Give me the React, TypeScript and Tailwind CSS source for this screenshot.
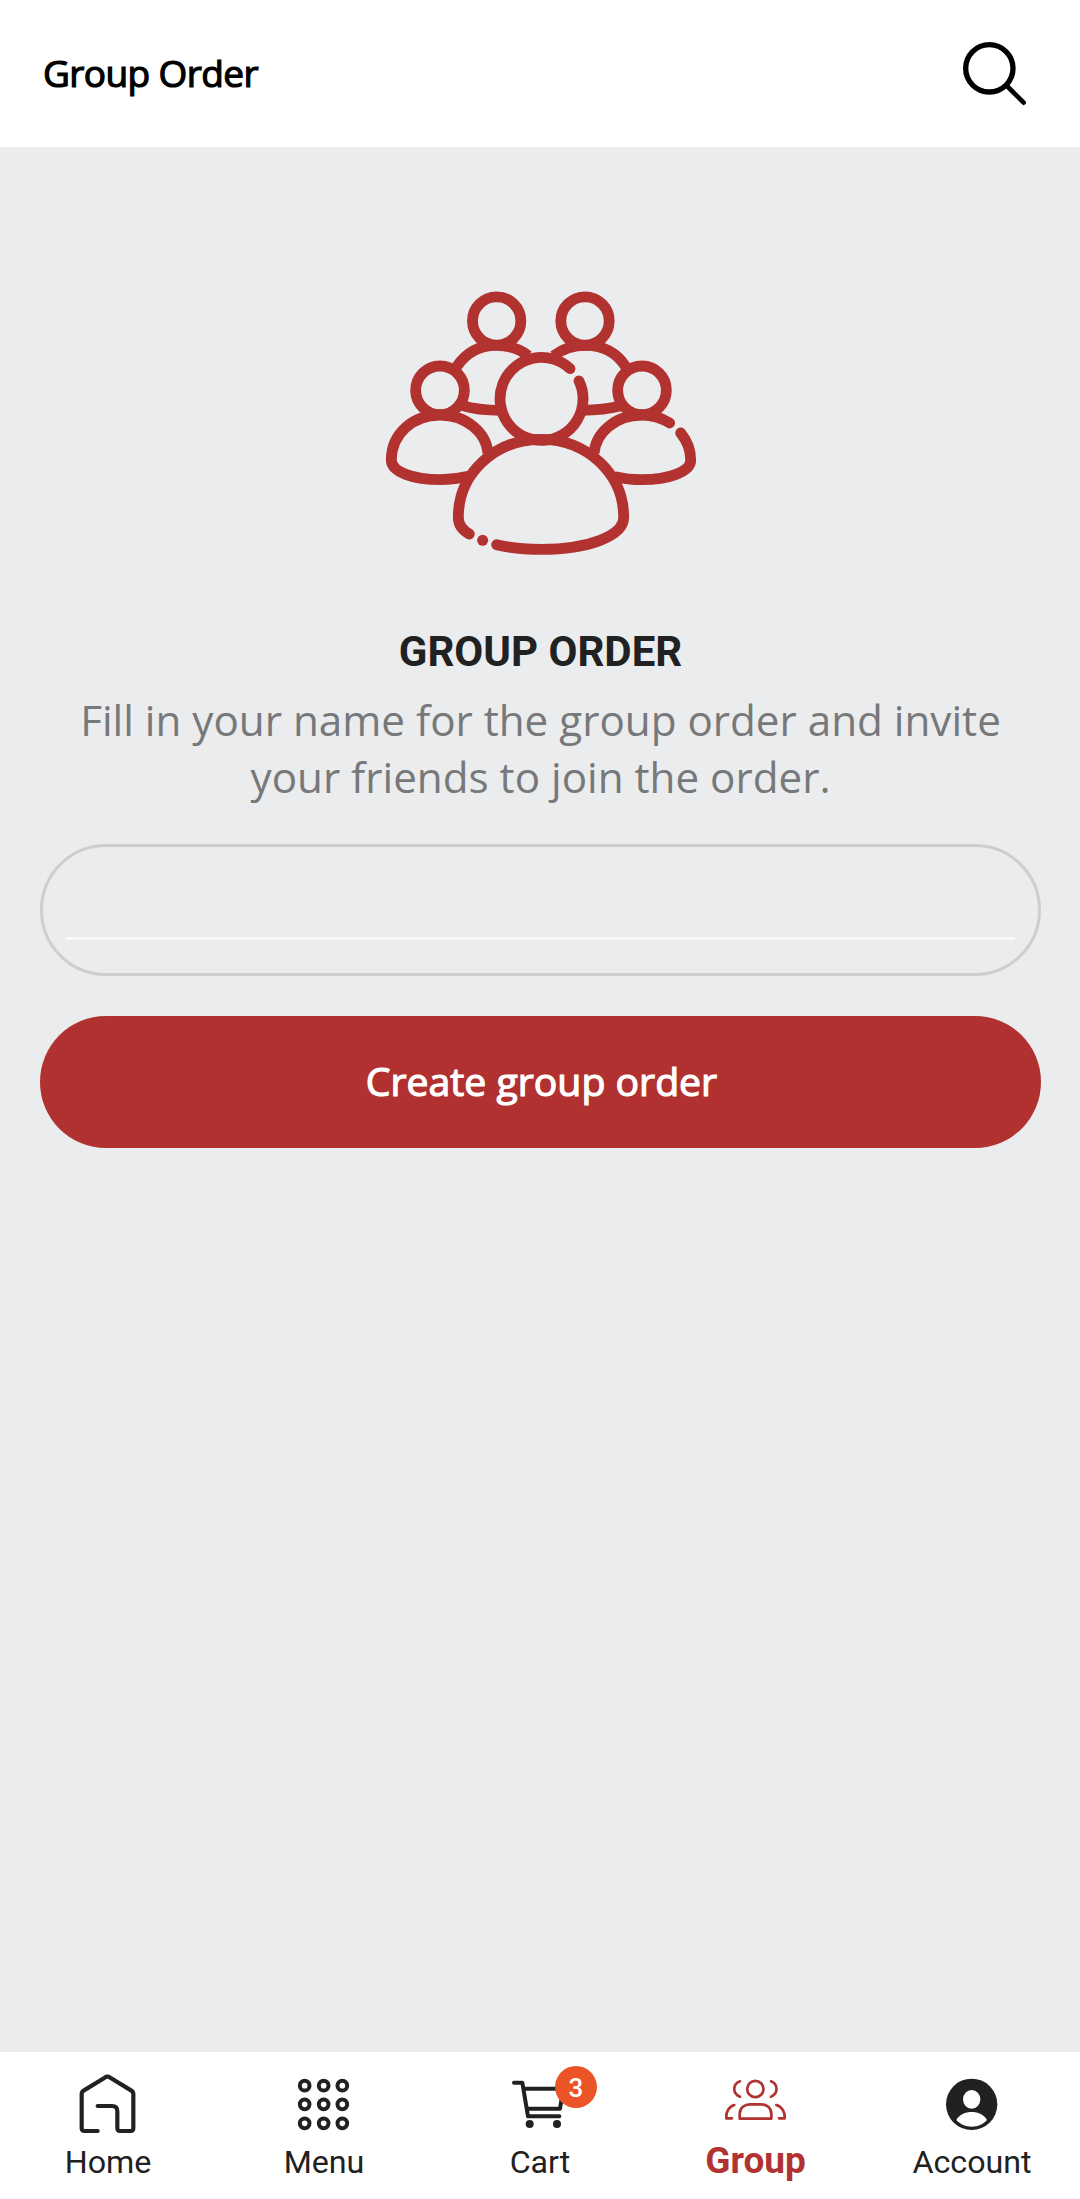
import React, { useState } from "react";

interface NavItemProps {
  label: string;
  active?: boolean;
  badge?: number;
  onClick: () => void;
  children: React.ReactNode;
}

const SearchIcon = () => (
  <svg
    viewBox="0 0 192 192"
    className="h-16 w-16"
    fill="none"
    stroke="currentColor"
    strokeWidth={16}
    strokeLinecap="round"
  >
    <circle cx="79" cy="79" r="71" />
    <path d="M132 132L182 182" strokeWidth={14} />
  </svg>
);

const PeopleIllustration = () => (
  <svg
    viewBox="0 0 1020 900"
    className="mr-px h-[300px] w-[340px] text-[#b23230]"
    fill="none"
    stroke="currentColor"
    strokeWidth={32.5}
    strokeLinecap="round"
  >
    {/* back row */}
    <circle cx="380" cy="153" r="72.5" />
    <circle cx="645" cy="153" r="72.5" />
    <g strokeLinecap="butt">
      <path d="M260 290C288 248 330 226 378 226C415 226 448 236 475 257" />
      <path d="M551 257C578 236 610 226 648 226C700 226 742 250 767 290" />
      <path d="M278 407C310 417 345 421 392 421" />
      <path d="M634 421C690 420 715 417 750 408" />
    </g>

    {/* middle row */}
    <circle cx="210" cy="361" r="73" />
    <circle cx="816" cy="361" r="73" />
    <g strokeLinecap="butt">
      <path d="M295 619C267 626 240 629 212 629C130 629 64 606 64 570C64 490 130 435 210 435C290 435 350 490 354 550" />
      <path d="M672 550C677 490 735 435 816 435" />
    </g>
    <path d="M816 435C845 435 875 444 899 459" />
    <path d="M932 489C952 513 962 540 962 571C962 606 895 629 815 629C785 629 760 626 740 621" />

    {/* front person */}
    <path d="M627 333A124.5 124.5 0 1 1 600 296" />
    <path d="M298 792C276 780 265 763 265 742C265 610 375 508 513 508C650 508 761 610 761 742C761 800 650 838 515 838C465 838 415 833 380 824" />
    <circle cx="338" cy="811" r="16.5" fill="currentColor" stroke="none" />
  </svg>
);

const HomeIcon = () => (
  <svg
    viewBox="0 0 216 216"
    className="h-[72px] w-[72px]"
    fill="none"
    stroke="currentColor"
    strokeWidth={12.5}
    strokeLinecap="round"
  >
    <path d="M77 195H37Q29 195 29 187V84Q29 77 36 73L98 35Q106 29 115 35L177 73Q184 77 184 84V187Q184 195 176 195H144Q136 195 136 187V136Q136 120 120 120H77" />
  </svg>
);

const MenuIcon = () => (
  <svg
    viewBox="0 0 216 216"
    className="h-[72px] w-[72px]"
    fill="none"
    stroke="currentColor"
    strokeWidth={12}
  >
    {[59, 115, 172].map((y) =>
      [50, 107, 163].map((x) => (
        <circle key={`${x}-${y}`} cx={x} cy={y} r="14.5" />
      ))
    )}
  </svg>
);

const CartIcon = () => (
  <svg
    viewBox="0 0 216 216"
    className="h-[72px] w-[72px]"
    fill="none"
    stroke="currentColor"
    strokeWidth={12}
    strokeLinecap="round"
    strokeLinejoin="round"
  >
    <path d="M30 50H55L72 151H166" />
    <path d="M60 68H178L168 128H70" />
    <circle cx="77" cy="174" r="12" fill="currentColor" stroke="none" />
    <circle cx="159" cy="174" r="12" fill="currentColor" stroke="none" />
  </svg>
);

const GroupIcon = () => (
  <svg
    viewBox="0 0 216 216"
    className="h-[72px] w-[72px]"
    fill="none"
    stroke="currentColor"
    strokeWidth={8}
    strokeLinecap="round"
    strokeLinejoin="round"
  >
    <circle cx="106" cy="69" r="24.5" />
    <path d="M60 46C37 55 37 83 60 92" />
    <path d="M153 46C175 55 175 83 153 92" />
    <path d="M59 158V144C59 125 74 115 90 115H123C140 115 154 125 154 144V158Z" />
    <path d="M43 117C26 122 17 139 19 157H36" />
    <path d="M169 117C186 122 196 139 194 157H177" />
  </svg>
);

const AccountIcon = () => (
  <svg viewBox="0 0 216 216" className="h-[72px] w-[72px]">
    <circle cx="107" cy="115" r="77" fill="currentColor" />
    <ellipse cx="107" cy="100" rx="26" ry="28" fill="#fff" />
    <path
      d="M61 162C70 146 88 138 107 138C126 138 144 146 153 162C142 175 125 182 107 182C89 182 72 175 61 162Z"
      fill="#fff"
    />
  </svg>
);

const NavItem: React.FC<NavItemProps> = ({
  label,
  active,
  badge,
  onClick,
  children,
}: NavItemProps) => {
  return (
    <button
      onClick={onClick}
      className={`flex w-full flex-col items-center pt-3.5 ${
        active ? "text-[#b03331]" : "text-[#212121]"
      }`}
    >
      <span className="relative">
        {children}
        {badge && (
          <span className="absolute top-0 left-[51px] flex h-[42px] w-[42px] items-center justify-center rounded-full bg-[#ea5426] pt-0.5 text-[26px] font-medium text-white">
            {badge}
          </span>
        )}
      </span>
      <span
        className={`leading-10 ${
          active ? "mt-[3px] pr-px text-[37px] font-bold" : "mt-1 text-[32.2px]"
        }`}
      >
        {label}
      </span>
    </button>
  );
};

const App = () => {
  const [name, setName] = useState("");
  const [activeTab, setActiveTab] = useState("Group");

  const tabs = [
    { label: "Home", icon: <HomeIcon /> },
    { label: "Menu", icon: <MenuIcon /> },
    { label: "Cart", icon: <CartIcon />, badge: 3 },
    { label: "Group", icon: <GroupIcon /> },
    { label: "Account", icon: <AccountIcon /> },
  ];

  return (
    <div className="flex h-[2199px] w-[1080px] flex-col bg-[#ebeced] font-['Open_Sans',sans-serif]">
      <header className="flex h-[147px] items-center justify-between bg-white pr-[53px] pl-[43px] text-black">
        <h1 className="pb-0.5 text-[37px] tracking-[-0.6px] [-webkit-text-stroke:1.2px_#000]">
          Group Order
        </h1>
        <button aria-label="Search">
          <SearchIcon />
        </button>
      </header>

      <main className="flex flex-1 flex-col items-center pt-[123px] pr-[39px] pl-10">
        <PeopleIllustration />
        <h2 className="mt-[57px] font-[Roboto,sans-serif] text-[42px] leading-[50px] font-bold text-[#212121]">
          GROUP ORDER
        </h2>
        <p className="mt-3.5 text-center text-[42.2px] leading-[57px] text-[#777879]">
          Fill in your name for the group order and invite
          <br />
          your friends to join the order.
        </p>

        <div className="mt-[39px] h-[132px] w-full rounded-full border-[3px] border-[#cdcecf] px-[23px]">
          <input
            value={name}
            onChange={(e) => setName(e.target.value)}
            className="h-[93px] w-full border-b-[3px] border-[#f8f8f9] text-[38px] text-[#212121] outline-none"
          />
        </div>
        <button className="mt-10 h-[132px] w-full rounded-full bg-[#b03130] pb-0.5 pl-0.5 text-[39.2px] text-white [-webkit-text-stroke:1.2px_#fff]">
          Create group order
        </button>
      </main>

      <nav className="grid h-[147px] grid-cols-5 items-start bg-white font-[Roboto,sans-serif]">
        {tabs.map((tab) => (
          <NavItem
            key={tab.label}
            label={tab.label}
            badge={tab.badge}
            active={activeTab === tab.label}
            onClick={() => setActiveTab(tab.label)}
          >
            {tab.icon}
          </NavItem>
        ))}
      </nav>
    </div>
  );
};

export default App;
